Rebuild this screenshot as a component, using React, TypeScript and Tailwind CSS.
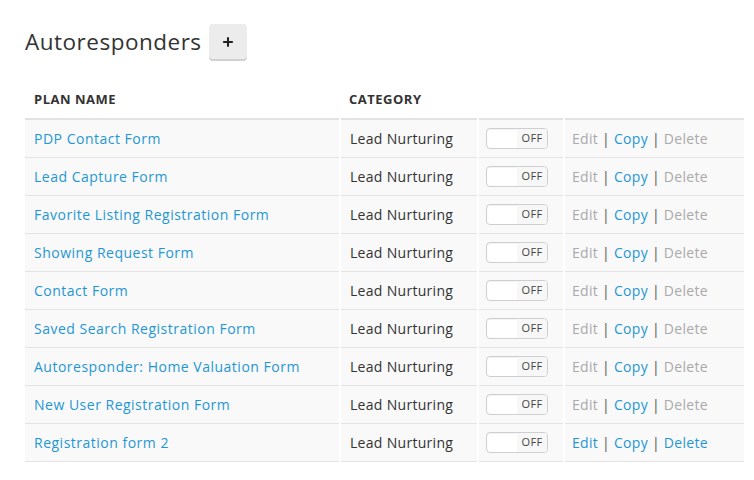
import { Plus } from 'lucide-react';

interface Plan {
  name: string;
  active: boolean;
}

const plans: Plan[] = [
  { name: 'PDP Contact Form', active: false },
  { name: 'Lead Capture Form', active: false },
  { name: 'Favorite Listing Registration Form', active: false },
  { name: 'Showing Request Form', active: false },
  { name: 'Contact Form', active: false },
  { name: 'Saved Search Registration Form', active: false },
  { name: 'Autoresponder: Home Valuation Form', active: false },
  { name: 'New User Registration Form', active: false },
  { name: 'Registration form 2', active: true },
];

function Toggle() {
  return (
    <div className="flex h-[21px] w-[62px] overflow-hidden rounded-[4px] border border-[#cfcfcf] bg-white shadow-[inset_0_1px_1px_rgba(0,0,0,0.05)]">
      <div className="flex-1" />
      <div className="flex w-[30px] items-center justify-center bg-[#f7f7f7] text-[11px] text-[#444]">OFF</div>
    </div>
  );
}

export default function App() {
  return (
    <div className="min-h-[480px] bg-white px-[25px] pt-[24px] font-['Open_Sans',sans-serif] text-[#333]">
      <div className="flex items-center gap-[7px]">
        <h1 className="text-[22.5px] leading-[30px] tracking-[0.5px] text-[#333]">Autoresponders</h1>
        <button className="flex h-[35px] w-[38px] items-center justify-center rounded-[4px] bg-[#ececec] shadow-[0_2px_0_#d0d0d0]">
          <Plus size={14} strokeWidth={3.5} className="text-[#222]" />
        </button>
      </div>

      <table className="mt-[23px] w-[719px] border-collapse text-[14px] tracking-[0.3px]">
        <thead>
          <tr className="border-b-2 border-[#e2e2e2]">
            <th className="h-[37px] w-[315px] px-[9px] text-left text-[13px] font-bold tracking-[0.5px] text-[#333]">PLAN NAME</th>
            <th className="w-[138px] px-[9px] text-left text-[13px] font-bold tracking-[0.5px] text-[#333]">CATEGORY</th>
            <th className="w-[86px]" />
            <th />
          </tr>
        </thead>
        <tbody>
          {plans.map((p) => (
            <tr key={p.name} className="h-[38px] border-b border-[#e4e4e4] bg-[#f9f9f9]">
              <td className="border-r-2 border-white px-[9px] tracking-[0.5px] text-[#1f97d4]">{p.name}</td>
              <td className="border-r-2 border-white px-[9px]">Lead Nurturing</td>
              <td className="border-r-2 border-white px-[7px]">
                <Toggle />
              </td>
              <td className="px-[7px] text-[#aaa]">
                <span className={p.active ? 'text-[#1f97d4]' : 'text-[#aaa]'}>Edit</span>
                <span className="text-[#555]"> | </span>
                <span className="text-[#1f97d4]">Copy</span>
                <span className="text-[#555]"> | </span>
                <span className={p.active ? 'text-[#1f97d4]' : 'text-[#aaa]'}>Delete</span>
              </td>
            </tr>
          ))}
        </tbody>
      </table>
    </div>
  );
}
